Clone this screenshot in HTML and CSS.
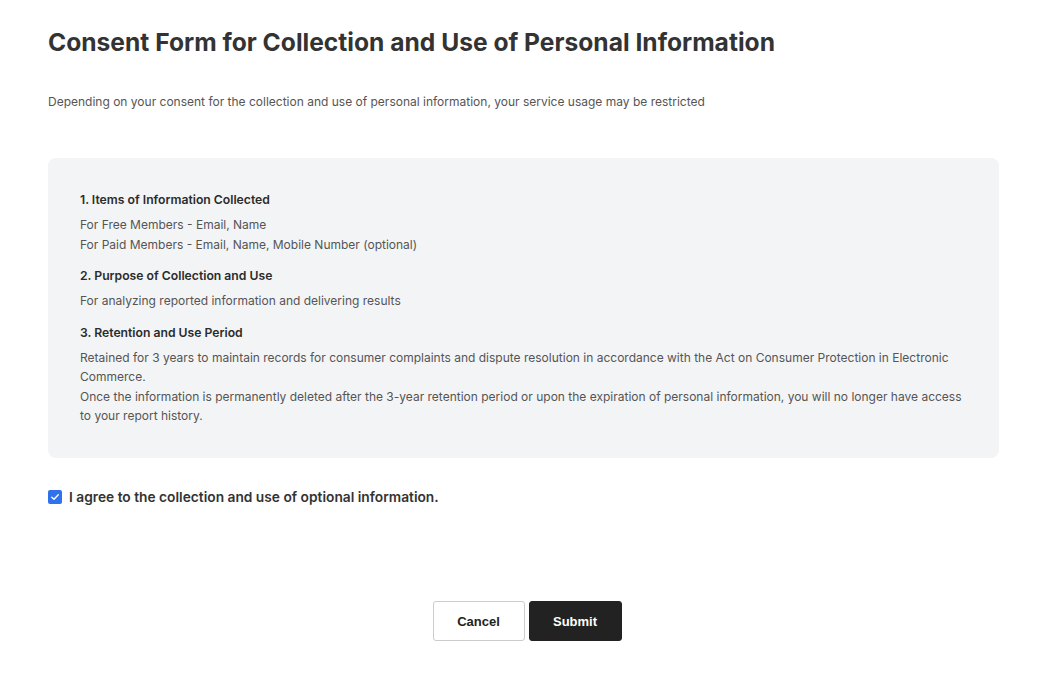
FILE: index.html
```html
<!DOCTYPE html>
<html lang="en">

<head>
    <meta charset="UTF-8">
    <meta name="viewport" content="width=device-width, initial-scale=1.0">
    <title>Consent Form</title>
    <link rel="stylesheet" href="styles.css">
</head>

<body>
    <div class="page">
        <h1 class="title">Consent Form for Collection and Use of Personal Information</h1>
        <p class="desc">Depending on your consent for the collection and use of personal information, your service usage may be restricted</p>

        <div class="terms">
            <h3>1. Items of Information Collected</h3>
            <p>For Free Members - Email, Name<br>For Paid Members - Email, Name, Mobile Number (optional)</p>
            <h3>2. Purpose of Collection and Use</h3>
            <p>For analyzing reported information and delivering results</p>
            <h3>3. Retention and Use Period</h3>
            <p>Retained for 3 years to maintain records for consumer complaints and dispute resolution in accordance with the Act on Consumer Protection in Electronic Commerce.<br>Once the information is permanently deleted after the 3-year retention period or upon the expiration of personal information, you will no longer have access to your report history.</p>
        </div>

        <label class="agree">
            <span class="check">
                <svg width="10" height="10" viewBox="0 0 10 10"><path d="M1.8 5.2 L4 7.2 L8.3 2.8" fill="none" stroke="#fff" stroke-width="1.4" stroke-linecap="round" stroke-linejoin="round"/></svg>
            </span>
            I agree to the collection and use of optional information.
        </label>
    </div>

    <div class="btns">
        <button class="btn cancel">Cancel</button>
        <button class="btn submit">Submit</button>
    </div>
</body>

</html>
```

FILE: styles.css
```css
* {
    margin: 0;
    padding: 0;
    box-sizing: border-box;
}

html,
body {
    width: 100%;
    height: 100%;
    background: #fff;
    font-family: Inter, "Noto Sans", sans-serif;
    color: #333;
}

.page {
    width: 951px;
    margin-left: 48px;
    padding-top: 26px;
}

.title {
    font-size: 24.6px;
    font-weight: 700;
    line-height: 32px;
    color: #333;
}

.desc {
    margin-top: 35px;
    font-size: 12px;
    line-height: 18px;
    color: #555;
}

.terms {
    margin-top: 47px;
    background: #f3f4f6;
    border-radius: 8px;
    padding: 32px 32px 17px 32px;
    min-height: 300px;
}

.terms h3 {
    font-size: 12.2px;
    font-weight: 600;
    line-height: 19px;
    color: #2b2b2b;
    margin-bottom: 6px;
}

.terms p {
    font-size: 12px;
    line-height: 19.5px;
    color: #555;
    margin-bottom: 12px;
}

.agree {
    display: flex;
    align-items: center;
    gap: 7px;
    margin-top: 31px;
    font-size: 13.75px;
    font-weight: 600;
    color: #333;
}

.check {
    width: 14px;
    height: 14px;
    border-radius: 2px;
    background: #2f72ec;
    display: flex;
    align-items: center;
    justify-content: center;
}

.btns {
    display: flex;
    justify-content: center;
    gap: 4px;
    margin-top: 96px;
    padding-right: 2px;
}

.btn {
    width: 92px;
    height: 40px;
    border-radius: 3px;
    font-family: "Liberation Sans", Arial, sans-serif;
    font-size: 13px;
    font-weight: bold;
    cursor: pointer;
}

.cancel {
    background: #fff;
    border: 1px solid #ccc;
    color: #222;
}

.submit {
    width: 93px;
    background: #222;
    border: 1px solid #222;
    color: #fff;
}
```
